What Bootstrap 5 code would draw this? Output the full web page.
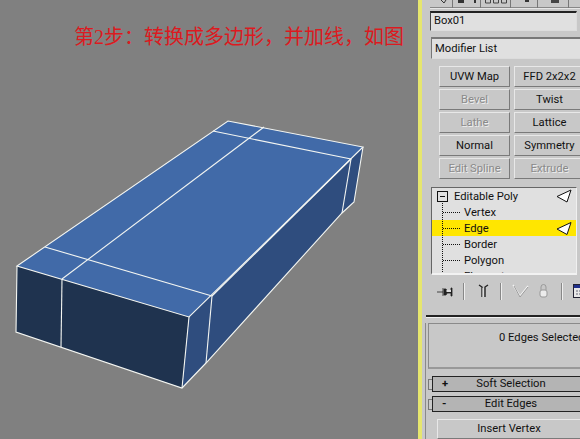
<!DOCTYPE html>
<html lang="zh-CN">
<head>
  <meta charset="UTF-8">
  <meta name="viewport" content="width=device-width, initial-scale=1.0">
  <title>第2步</title>
  <link href="https://cdn.jsdelivr.net/npm/bootstrap@5.3.0/dist/css/bootstrap.min.css" rel="stylesheet">
  <style>
    html, body { height: 439px; overflow: hidden; background: #808080; }
    body { font-family: Roboto, "Liberation Sans", Arial, sans-serif; font-size: 11.2px; color: #111; }
    .viewport-area { width: 418px; height: 439px; background: #808080; flex: none; }
    .viewport-area svg { display: block; }
    .step-title { left: 74px; top: 24px; color: #dc1a20; font-size: 20px; line-height: 27px; font-family: "Liberation Serif", "Noto Sans CJK SC", serif; white-space: nowrap; }
    .cmd-edge { width: 4px; flex: none; background: #e6e66e; }
    .cmd-panel { width: 158px; height: 439px; flex: none; background: #c8c8c8; overflow: hidden; }
    .tab-strip { display: block; height: 9px; }
    .name-box, .mod-box { background: #e0e0e0; border-radius: 0; border: 1px solid #dcdcdc; border-top: 2px solid #222; border-left: 1px solid #444; padding: 0 0 0 3px; font-size: 11.2px; line-height: 16px; color: #111; min-height: 0; }
    .name-box { margin: 2px 3px 0 8px; width: auto; height: 20px; }
    .mod-box { margin: 6px -4px 0 9px; width: auto; height: 22px; padding-top: 2px; border-top-color: #777; border-left-color: #777; }
    .mod-grid { grid-template-columns: 71px 71px; column-gap: 4px; row-gap: 2px; margin: 7px 0 0 17px; }
    .max-btn { background: #c8c8c8; border-radius: 0; border: 1px solid; border-color: #e8e8e8 #7a7a7a #7a7a7a #e8e8e8; height: 21px; padding: 0; font-size: 11.2px; line-height: 19px; color: #111; white-space: nowrap; }
    .max-btn.off { color: #8a8a8a; text-shadow: 1px 1px 0 #eee; }
    .stack-wrap { margin: 8px 3px 0 9px; height: 88px; overflow: hidden; background: #e0e0e0; border-top: 1px solid #666; border-left: 1px solid #666; border-right: 1px solid #f0f0f0; border-bottom: 2px solid #f2f2f2; }
    .stack-rows { position: relative; }
    .stack-row { background: transparent; border: 0; border-radius: 0; height: 16px; line-height: 18px; padding: 0 0 0 32px; font-size: 11.2px; color: #111; position: relative; }
    .stack-row.top-row { padding-left: 22px; }
    .stack-row.picked { background: #ffe600; }
    .stack-tree { position: absolute; left: 0; top: 0; }
    .tool-row { height: 40px; padding: 0 0 8px 15px; }
    .tool-row svg { display: block; flex: none; }
    .tool-sep { width: 1px; height: 17px; background: #888; border-right: 1px solid #eee; box-sizing: content-box; flex: none; }
    .gap9 { margin-left: 9px; }
    .gap10 { margin-left: 10px; }
    .gap13 { margin-left: 13px; }
    .rule-line { height: 2px; background: #222; border-bottom: 1px solid #f0f0f0; box-sizing: content-box; margin-left: 4px; }
    .lower-part { margin: 5px 0 0 3px; padding-left: 2px; border-left: 1px solid #8a8a8a; height: 120px; }
    .sel-box { height: 46px; border: 1px solid #8a8a8a; border-right: 0; border-bottom: 2px solid #999; padding: 6px 0 0 70px; font-size: 11.2px; white-space: nowrap; line-height: 15px; overflow: hidden; }
    .roll-head { margin: 7px 0 0 4px; height: 16px; background: #b4b4b4; border: 1px solid #222; border-right: 0; padding: 0 12px 0 9px; font-size: 11.2px; line-height: 14px; position: relative; }
    .roll-head + .roll-head { margin-top: 4px; }
    .roll-head::before { content: ""; position: absolute; left: -5px; top: 2px; width: 4px; height: 11px; border: 1px solid #777; border-right: 0; }
    .roll-sign { font-weight: 700; width: 12px; }
    .insert-btn { margin: 7px 0 0 9px; width: 150px; height: 20px; line-height: 18px; text-align: center; padding-right: 6px; }
  </style>
</head>
<body>
  <div class="d-flex">
    <!-- viewport -->
    <div class="viewport-area position-relative">
      <svg width="418" height="439" viewBox="0 0 418 439">
        <polygon points="17,266 228,121 363,147 189,317" fill="#416aa8"/>
        <polygon points="17,266 189,317 182,388 16,332" fill="#1f334f"/>
        <polygon points="189,317 363,147 354,202 342,213 206,363 182,388" fill="#2f4d7e"/>
        <g fill="none" stroke="#f4f6f2" stroke-width="1.1">
          <polygon points="17,266 228,121 363,147 189,317"/>
          <polyline points="17,266 16,332 182,388 206,363 342,213 354,202 363,147"/>
          <line x1="189" y1="317" x2="182" y2="388"/>
          <line x1="62" y1="279" x2="61" y2="347"/>
          <line x1="212" y1="296" x2="206" y2="363"/>
          <line x1="351" y1="159" x2="342" y2="213"/>
          <line x1="45" y1="247" x2="212" y2="296"/>
          <line x1="62" y1="279" x2="264" y2="127"/>
          <line x1="213" y1="131" x2="351" y2="159"/>
          <line x1="351" y1="159" x2="212" y2="296"/>
        </g>
      </svg>
      <div class="step-title position-absolute">第2步：转换成多边形，并加线，如图</div>
    </div>
    <div class="cmd-edge"></div>
    <!-- command panel -->
    <div class="cmd-panel">
      <svg class="tab-strip" width="158" height="9" viewBox="0 0 158 9">
        <path d="M8 7.500H158" stroke="#888"/>
        <path d="M8 8.500H158" stroke="#e6e6e6"/>
        <path d="M30.500 0V8M58.500 0V8M88.500 0V8M115.500 0V8M146.500 0V8" stroke="#777"/>
        <path d="M19 0l3 3M24 0l-2 3" stroke="#333"/>
        <rect x="36" y="0" width="6" height="3" fill="#333"/>
        <rect x="52" y="0" width="2" height="3" fill="#333"/>
        <path d="M63.500 0v3h5v-3M71.500 0v3h5v-3M79.500 0v3h5v-3" fill="none" stroke="#444"/>
        <rect x="103" y="0" width="4" height="2" fill="#333"/>
        <rect x="129" y="0" width="8" height="3" fill="#444"/>
      </svg>
      <div class="name-box form-control">Box01</div>
      <div class="mod-box form-control">Modifier List</div>
      <div class="mod-grid d-grid">
        <button class="btn max-btn">UVW Map</button>
        <button class="btn max-btn">FFD 2x2x2</button>
        <button class="btn max-btn off">Bevel</button>
        <button class="btn max-btn">Twist</button>
        <button class="btn max-btn off">Lathe</button>
        <button class="btn max-btn">Lattice</button>
        <button class="btn max-btn">Normal</button>
        <button class="btn max-btn">Symmetry</button>
        <button class="btn max-btn off">Edit Spline</button>
        <button class="btn max-btn off">Extrude</button>
      </div>
      <div class="stack-wrap">
        <div class="stack-rows list-group">
          <div class="stack-row list-group-item top-row">Editable Poly</div>
          <div class="stack-row list-group-item">Vertex</div>
          <div class="stack-row list-group-item picked">Edge</div>
          <div class="stack-row list-group-item">Border</div>
          <div class="stack-row list-group-item">Polygon</div>
          <div class="stack-row list-group-item">Element</div>
          <svg class="stack-tree" width="146" height="90" viewBox="0 0 146 90">
            <g fill="none" stroke="#111" stroke-width="1" stroke-dasharray="1 1">
              <line x1="10.500" y1="13" x2="10.500" y2="90"/>
              <line x1="11" y1="24.500" x2="29" y2="24.500"/>
              <line x1="11" y1="40.500" x2="29" y2="40.500"/>
              <line x1="11" y1="56.500" x2="29" y2="56.500"/>
              <line x1="11" y1="72.500" x2="29" y2="72.500"/>
            </g>
            <rect x="5.500" y="3.500" width="10" height="10" fill="#e0e0e0" stroke="#111"/>
            <line x1="8" y1="8.500" x2="13" y2="8.500" stroke="#111"/>
            <polygon points="125,8.500 139,2 135,14" fill="#fff" stroke="#111"/>
            <polygon points="125,41 139,34.500 135,46.500" fill="#fff" stroke="#111"/>
          </svg>
        </div>
      </div>
      <div class="tool-row d-flex align-items-center">
        <svg width="17" height="13" viewBox="0 0 17 13">
          <path d="M0 7h6M6 3v8M7 4h2l1 2h4V3h1v8h-1V8h-4l-1 2H7z" fill="#222" stroke="#222" stroke-width=".8"/>
          <rect x="9.500" y="5" width="4.500" height="2" fill="#ddd"/>
        </svg>
        <span class="tool-sep gap9"></span>
        <svg class="gap13" width="12" height="14" viewBox="0 0 12 14">
          <path d="M1 1l3 2v10M10 1L7 3v10" fill="none" stroke="#222" stroke-width="1.400"/>
          <path d="M5 4v9" stroke="#eee"/>
        </svg>
        <span class="tool-sep gap10"></span>
        <svg class="gap10" width="18" height="15" viewBox="0 0 18 15">
          <path d="M1 1l7 11 8-10" fill="none" stroke="#f2f2f2" stroke-width="1.400"/>
          <path d="M2 2l6 11 8-10" fill="none" stroke="#999" stroke-width="1"/>
        </svg>
        <svg class="gap9" width="9" height="14" viewBox="0 0 9 14">
          <path d="M2 6V3a2.500 2.500 0 0 1 5 0v3" fill="none" stroke="#999"/>
          <rect x="1" y="6" width="7" height="7" rx="2" fill="#ececec" stroke="#999"/>
        </svg>
        <span class="tool-sep gap13"></span>
        <svg class="gap10" width="13" height="14" viewBox="0 0 13 14">
          <rect x=".5" y=".5" width="12" height="13" fill="#e8e8e8" stroke="#223"/>
          <rect x="1" y="1" width="11" height="3" fill="#1f2f8c"/>
          <path d="M3 7h8M3 10h8" stroke="#667" stroke-dasharray="2 1"/>
        </svg>
      </div>
      <div class="rule-line"></div>
      <div class="lower-part">
        <div class="sel-box">0 Edges Selected</div>
        <div class="roll-head d-flex text-nowrap">
          <span class="roll-sign">+</span><span class="flex-grow-1 text-center">Soft Selection</span>
        </div>
        <div class="roll-head d-flex text-nowrap">
          <span class="roll-sign">-</span><span class="flex-grow-1 text-center">Edit Edges</span>
        </div>
        <button class="btn max-btn insert-btn d-block">Insert Vertex</button>
      </div>
    </div>
  </div>
  <script src="https://cdn.jsdelivr.net/npm/bootstrap@5.3.0/dist/js/bootstrap.bundle.min.js"></script>
</body>
</html>
